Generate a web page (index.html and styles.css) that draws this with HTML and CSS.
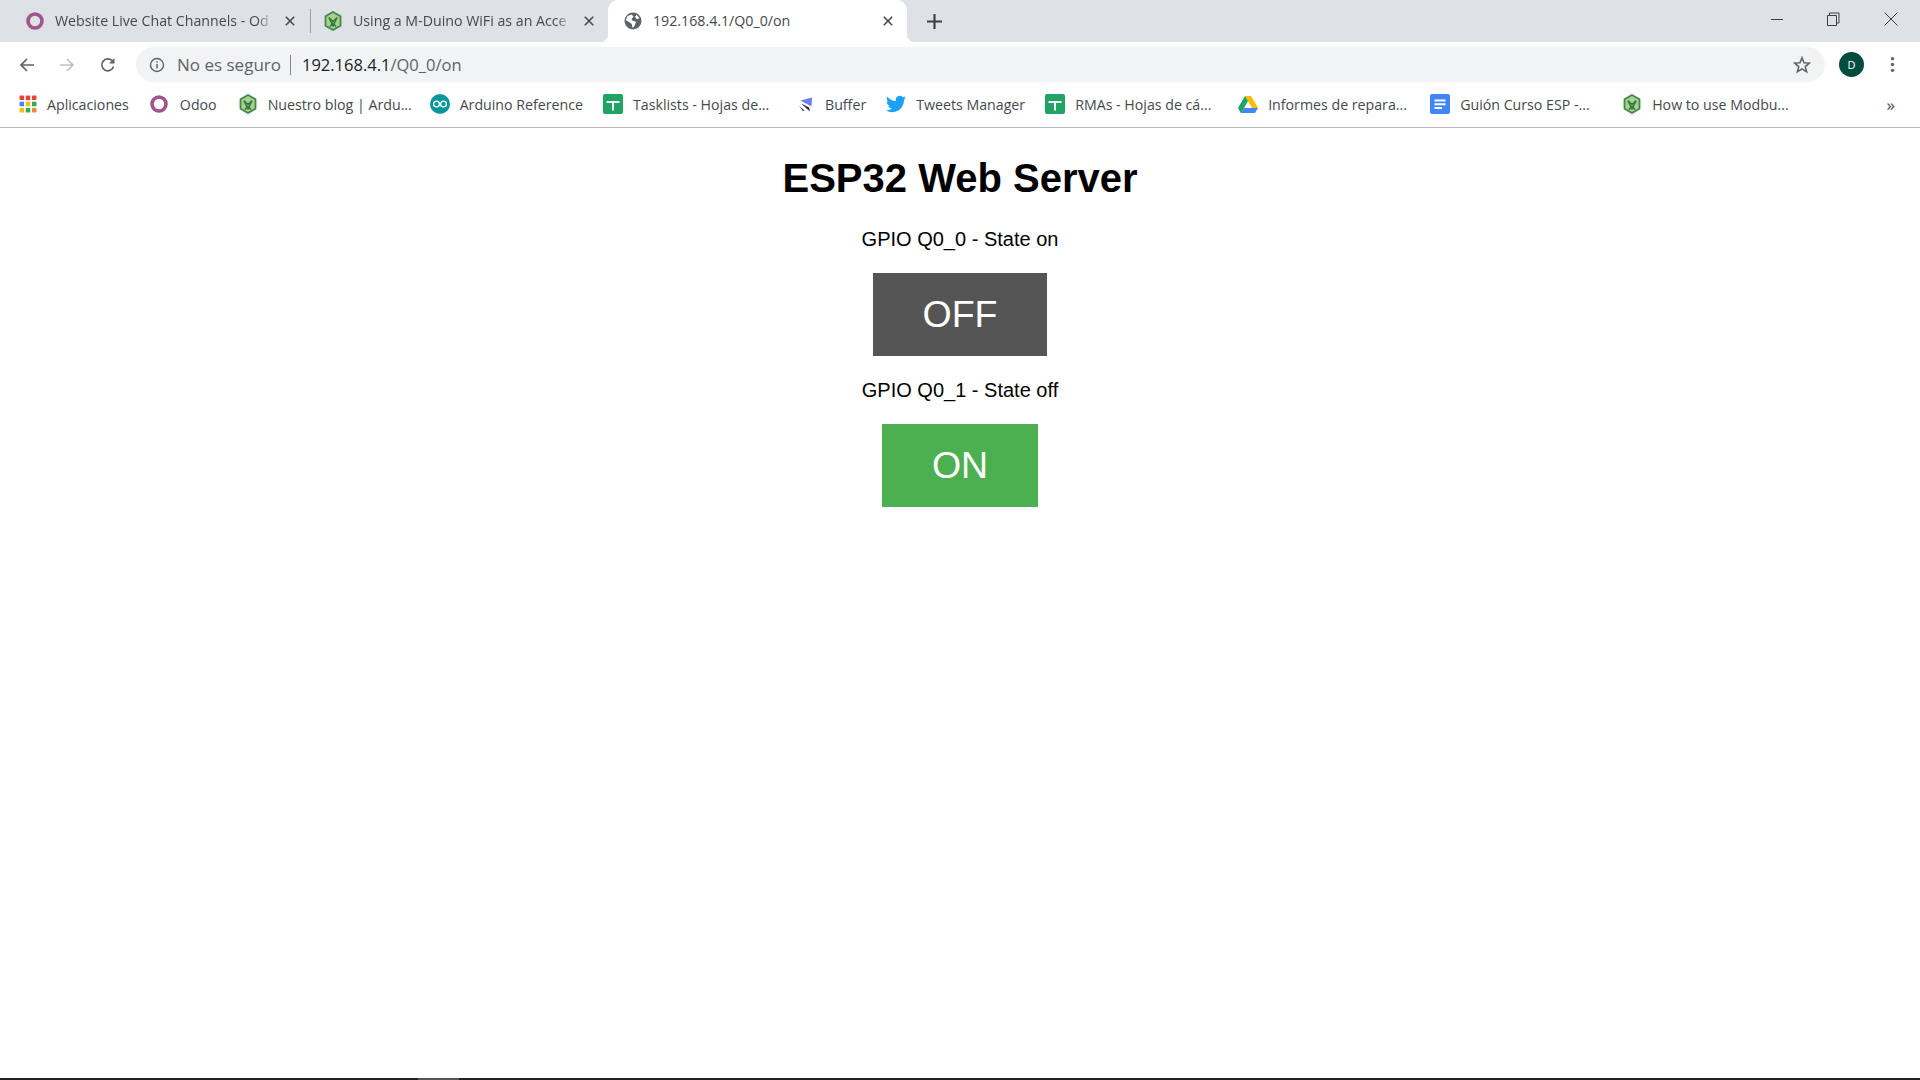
FILE: index.html
```html
<!DOCTYPE html>
<html lang="en">
<head>
    <meta charset="UTF-8">
    <title>192.168.4.1/Q0_0/on</title>
    <link rel="stylesheet" href="styles.css">
</head>
<body>

    <!-- Shared favicons -->
    <svg class="defs" width="0" height="0">
        <symbol id="odoo" viewBox="0 0 20 20">
            <circle cx="10" cy="10" r="7" fill="none" stroke="#a0548b" stroke-width="3.6"/>
        </symbol>
        <symbol id="hex" viewBox="0 0 20 20">
            <path d="M10 1 17.500 5.200v9.600L10 19 2.500 14.800V5.200z" fill="#a9d08e" stroke="#3f8a4a" stroke-width="1.800"/>
            <path d="M5.800 6.500 10 10.500 14.200 6.500M5.800 6.500 10 15l4.200-8.500M7 15.500 10 12M13 15.500 10 12" fill="none" stroke="#2f7a3c" stroke-width="1.400"/>
        </symbol>
        <symbol id="sheet" viewBox="0 0 20 20">
            <rect width="20" height="20" rx="2" fill="#1fa463"/>
            <path d="M3.500 7h13v2h-5.500v7.500H9V9H3.500z" fill="#fff"/>
        </symbol>
        <symbol id="close" viewBox="0 0 10 10">
            <path d="M.8.800l8.400 8.400M9.200.800.800 9.200" stroke="#45494e" stroke-width="1.600"/>
        </symbol>
    </svg>

    <header class="chrome">
        <div class="tabstrip">
            <div class="tab tab-first">
                <svg class="fav"><use href="#odoo"/></svg>
                <span class="tab-title">Website Live Chat Channels - Od</span>
                <svg class="tab-close"><use href="#close"/></svg>
            </div>
            <div class="tab-sep"></div>
            <div class="tab">
                <svg class="fav"><use href="#hex"/></svg>
                <span class="tab-title">Using a M-Duino WiFi as an Acce</span>
                <svg class="tab-close"><use href="#close"/></svg>
            </div>
            <div class="tab active">
                <svg class="fav" viewBox="0 0 20 20">
                    <circle cx="10" cy="10" r="8.500" fill="#5f6368"/>
                    <path d="M4.500 5 8.500 3.500 10.500 5.500 8.500 8 9.500 9.800 13 10.800 11.500 15 9.500 17 8.800 13 6 11 2.800 9zM13.500 3.800 16.500 7 14 8.200 12 6z" fill="#fff"/>
                </svg>
                <span class="tab-title">192.168.4.1/Q0_0/on</span>
                <svg class="tab-close"><use href="#close"/></svg>
            </div>
            <svg class="new-tab" viewBox="0 0 14 14"><path d="M7 0v14M0 7h14" stroke="#3c4043" stroke-width="2"/></svg>
            <div class="window-btns">
                <svg viewBox="0 0 14 14"><path d="M1 7.500h12" stroke="#3c4043" stroke-width="1"/></svg>
                <svg viewBox="0 0 14 14"><path d="M1.500 3.500h9v10h-9zM3.500 3.500v-2.500h9.500v10h-2.500" fill="none" stroke="#3c4043" stroke-width="1"/></svg>
                <svg viewBox="0 0 14 14"><path d="M.5.500l13 13M13.500.500l-13 13" stroke="#3c4043" stroke-width="1"/></svg>
            </div>
        </div>

        <div class="toolbar">
            <svg class="nav-btn" viewBox="0 0 16 16"><path d="M15 8H2M8 2 2 8l6 6" fill="none" stroke="#5f6368" stroke-width="1.700"/></svg>
            <svg class="nav-btn" viewBox="0 0 16 16"><path d="M1 8h13M8 2l6 6-6 6" fill="none" stroke="#bdc1c6" stroke-width="1.700"/></svg>
            <svg class="nav-btn" viewBox="0 0 16 16"><path d="M13.600 9.500A6 6 0 1 1 12.300 3.800" fill="none" stroke="#5f6368" stroke-width="1.700"/><path d="M14.500 1v5.500H9z" fill="#5f6368"/></svg>
            <div class="omnibox">
                <svg class="info" viewBox="0 0 16 16"><circle cx="8" cy="8" r="6.500" fill="none" stroke="#5f6368" stroke-width="1.400"/><path d="M8 7v4.500M8 4.300v1.500" stroke="#5f6368" stroke-width="1.500"/></svg>
                <span class="secure">No es seguro</span>
                <span class="omni-sep"></span>
                <span class="url"><b>192.168.4.1</b>/Q0_0/on</span>
                <svg class="star" viewBox="0 0 16 16"><path d="M8 1.500 9.800 6l4.700.300-3.600 3.100 1.200 4.700L8 11.500l-4.100 2.600 1.200-4.700L1.500 6.300 6.200 6z" fill="none" stroke="#5f6368" stroke-width="1.400"/></svg>
            </div>
            <div class="avatar">D</div>
            <svg class="menu" viewBox="0 0 4 16"><circle cx="2" cy="2.500" r="1.600" fill="#5f6368"/><circle cx="2" cy="8" r="1.600" fill="#5f6368"/><circle cx="2" cy="13.500" r="1.600" fill="#5f6368"/></svg>
        </div>

        <nav class="bookmarks">
            <a class="bm bm-apps">
                <svg class="fav apps" viewBox="0 0 16 16">
                    <g fill="#ea4335"><rect x="0.500" y="0.500" width="4" height="4"/><rect x="6" y="0.500" width="4" height="4"/><rect x="11.500" y="0.500" width="4" height="4"/></g>
                    <g fill="#4285f4"><rect x="0.500" y="6" width="4" height="4"/></g>
                    <g fill="#fbbc05"><rect x="6" y="6" width="4" height="4"/><rect x="0.500" y="11.500" width="4" height="4"/></g>
                    <g fill="#34a853"><rect x="11.500" y="6" width="4" height="4"/><rect x="6" y="11.500" width="4" height="4"/></g>
                    <rect x="11.500" y="11.500" width="4" height="4" fill="#ea8a35"/>
                </svg>
                Aplicaciones
            </a>
            <a class="bm bm-odoo"><svg class="fav"><use href="#odoo"/></svg>Odoo</a>
            <a class="bm bm-clip"><svg class="fav"><use href="#hex"/></svg>Nuestro blog | Ardu...</a>
            <a class="bm">
                <svg class="fav" viewBox="0 0 20 20">
                    <circle cx="10" cy="10" r="10" fill="#00979c"/>
                    <circle cx="6.500" cy="10" r="2.900" fill="none" stroke="#fff" stroke-width="1.400"/>
                    <circle cx="13.500" cy="10" r="2.900" fill="none" stroke="#fff" stroke-width="1.400"/>
                </svg>
                Arduino Reference
            </a>
            <a class="bm bm-clip"><svg class="fav"><use href="#sheet"/></svg>Tasklists - Hojas de...</a>
            <a class="bm">
                <svg class="fav" viewBox="0 0 20 20">
                    <path d="M5.500 6.500 17 3.500 16.500 12.500z" fill="#6b7fe8"/>
                    <path d="M6 9.500 14 13.500 15 17.500z" fill="#1a2040"/>
                    <path d="M4 12 9.500 16.500 8 17z" fill="#1a2040"/>
                </svg>
                Buffer
            </a>
            <a class="bm">
                <svg class="fav" viewBox="0 0 24 24"><path d="M23.950 4.570a10 10 0 0 1-2.820.77 4.960 4.960 0 0 0 2.160-2.720 9.900 9.900 0 0 1-3.120 1.180 4.920 4.920 0 0 0-8.380 4.480A13.940 13.940 0 0 1 1.640 3.160a4.820 4.820 0 0 0-.66 2.470c0 1.710.87 3.210 2.190 4.100a4.900 4.900 0 0 1-2.230-.61v.06a4.920 4.920 0 0 0 3.950 4.830 5 5 0 0 1-2.210.08 4.940 4.940 0 0 0 4.600 3.420A9.870 9.870 0 0 1 0 19.540a14 14 0 0 0 7.560 2.210c9.050 0 14-7.500 14-13.980 0-.21 0-.42-.02-.63a9.940 9.940 0 0 0 2.410-2.570z" fill="#1da1f2"/></svg>
                Tweets Manager
            </a>
            <a class="bm bm-clip bm-wide"><svg class="fav"><use href="#sheet"/></svg>RMAs - Hojas de cá...</a>
            <a class="bm bm-clip">
                <svg class="fav" viewBox="0 0 20 20">
                    <path d="M7 2h6l7 12h-6z" fill="#fbbc05"/>
                    <path d="M7 2 0 14l3 5.500L10 7z" fill="#1fa463"/>
                    <path d="M3 19h14l3-5H6z" fill="#4285f4"/>
                </svg>
                Informes de repara...
            </a>
            <a class="bm bm-clip">
                <svg class="fav" viewBox="0 0 20 20">
                    <rect width="20" height="20" rx="2" fill="#4285f4"/>
                    <path d="M4.500 5.500h11v2h-11zM4.500 9.200h11v2h-11zM4.500 13h7.500v2H4.500z" fill="#fff"/>
                </svg>
                Guión Curso ESP -...
            </a>
            <a class="bm bm-clip"><svg class="fav"><use href="#hex"/></svg>How to use Modbu...</a>
            <span class="more">&raquo;</span>
        </nav>
    </header>

    <main class="page">
        <h1>ESP32 Web Server</h1>
        <p class="label">GPIO Q0_0 - State on</p>
        <p class="action"><a href="#"><button class="button button-off">OFF</button></a></p>
        <p class="label">GPIO Q0_1 - State off</p>
        <p class="action"><a href="#"><button class="button">ON</button></a></p>
    </main>

    <div class="taskbar-edge"><span class="taskbar-thumb"></span></div>

</body>
</html>
```

FILE: styles.css
```css
* {
    box-sizing: border-box;
}

html, body {
    height: 100%;
}

body {
    margin: 0;
    display: flex;
    flex-direction: column;
    background: #fff;
    overflow: hidden;
}

.defs {
    position: absolute;
}

/* Browser chrome */
.chrome {
    height: 128px;
    border-bottom: 1px solid #b9b9b9;
    font-family: "Open Sans", sans-serif;
    color: #5f6368;
}

.fav {
    width: 20px;
    height: 20px;
    flex: none;
}

.tabstrip {
    height: 42px;
    background: #dee1e6;
    display: flex;
    align-items: center;
    font-size: 14.200px;
}

.tab {
    position: relative;
    width: 296px;
    height: 100%;
    padding: 0 13px 0 12px;
    display: flex;
    align-items: center;
}

.tab-first {
    width: 310px;
    padding: 0 15px 0 25px;
}

.tab-title {
    flex: 1;
    margin: -1px 0 0 10px;
    overflow: hidden;
    white-space: nowrap;
    color: #45494e;
    -webkit-mask-image: linear-gradient(to left, transparent 0, #000 16px);
    mask-image: linear-gradient(to left, transparent 0, #000 16px);
}

.tab.active .tab-title {
    -webkit-mask-image: none;
    mask-image: none;
}

.tab-close {
    width: 10px;
    height: 10px;
    flex: none;
    margin-left: 12px;
}

.tab-sep {
    width: 1px;
    height: 24px;
    background: #9aa0a6;
}

.tab.active {
    background: #fff;
    border-radius: 10px 10px 0 0;
    width: 299px;
    margin-left: 1px;
    padding: 0 14px 0 15px;
}

/* little flares at the foot of the active tab */
.tab.active::before,
.tab.active::after {
    content: "";
    position: absolute;
    bottom: 0;
    width: 8px;
    height: 8px;
}

.tab.active::before {
    left: -8px;
    background: radial-gradient(circle at 0 0, #dee1e6 8px, #fff 8.500px);
}

.tab.active::after {
    right: -8px;
    background: radial-gradient(circle at 100% 0, #dee1e6 8px, #fff 8.500px);
}

.new-tab {
    width: 15px;
    height: 15px;
    margin-left: 20px;
}

.window-btns {
    margin-left: auto;
    display: flex;
    gap: 42px;
    padding-right: 22px;
    margin-top: -5px;
}

.window-btns svg {
    width: 14px;
    height: 14px;
}

.window-btns svg:last-child {
    margin-left: 2px;
}

.toolbar {
    height: 41px;
    background: #fff;
    display: flex;
    align-items: center;
    padding: 4px 0 0 19px;
}

.nav-btn {
    width: 16px;
    height: 16px;
    margin-right: 24px;
}

.nav-btn:nth-child(3) {
    margin-left: 1px;
    margin-right: 23px;
}

.omnibox {
    flex: 1;
    height: 35px;
    margin-left: -3px;
    background: #f1f3f4;
    border-radius: 18px;
    display: flex;
    align-items: center;
    padding: 0 14px 0 13px;
    font-size: 17px;
}

.info {
    width: 16px;
    height: 16px;
    margin-right: 12px;
}

.secure {
    color: #5f6368;
}

.omni-sep {
    width: 1px;
    height: 20px;
    background: #80868b;
    margin: 0 11px 0 9px;
}

.url {
    color: #5f6368;
    font-size: 16.500px;
}

.url b {
    font-weight: 400;
    color: #202124;
}

.star {
    width: 18px;
    height: 18px;
    margin-left: auto;
}

.avatar {
    width: 25px;
    height: 25px;
    margin-left: 14px;
    border-radius: 50%;
    background: #004d40;
    color: #fff;
    font-size: 11px;
    line-height: 25px;
    text-align: center;
}

.menu {
    width: 5px;
    height: 17px;
    margin: 0 25px 0 26px;
}

.bookmarks {
    height: 42px;
    background: #fff;
    display: flex;
    align-items: center;
    gap: 20px;
    padding-left: 19px;
    font-size: 14.200px;
    color: #45494e;
    white-space: nowrap;
}

.bm {
    display: flex;
    align-items: center;
    gap: 10px;
}

/* truncated titles all get the same slot */
.bm-clip {
    width: 172px;
}

.bm-wide {
    width: 173px;
}

.bm-odoo {
    gap: 11px;
    margin-right: 1px;
}

.apps {
    width: 18px;
    height: 18px;
}

.more {
    margin-left: auto;
    padding-right: 25px;
    font-size: 17px;
}

/* Served page */
.page {
    flex: 1;
    font-family: "Liberation Sans", Helvetica, Arial, sans-serif;
    text-align: center;
    font-size: 20px;
    color: #000;
}

h1 {
    font-size: 40px;
    margin: 28px 0 26px;
}

p {
    margin: 20px 0;
}

.label {
    padding-top: 1px;
    margin-bottom: 0;
}

.action {
    margin-top: 19px;
}

.button {
    display: inline-block;
    margin: 2.500px;
    padding: 20px 50px;
    border: none;
    background-color: #4caf50;
    color: #fff;
    font-family: inherit;
    font-size: 37.500px;
    cursor: pointer;
}

.button-off {
    background-color: #555;
}

.taskbar-edge {
    height: 2px;
    background: #222;
    padding-left: 418px;
}

.taskbar-thumb {
    display: block;
    width: 41px;
    height: 2px;
    background: #555;
}
```
